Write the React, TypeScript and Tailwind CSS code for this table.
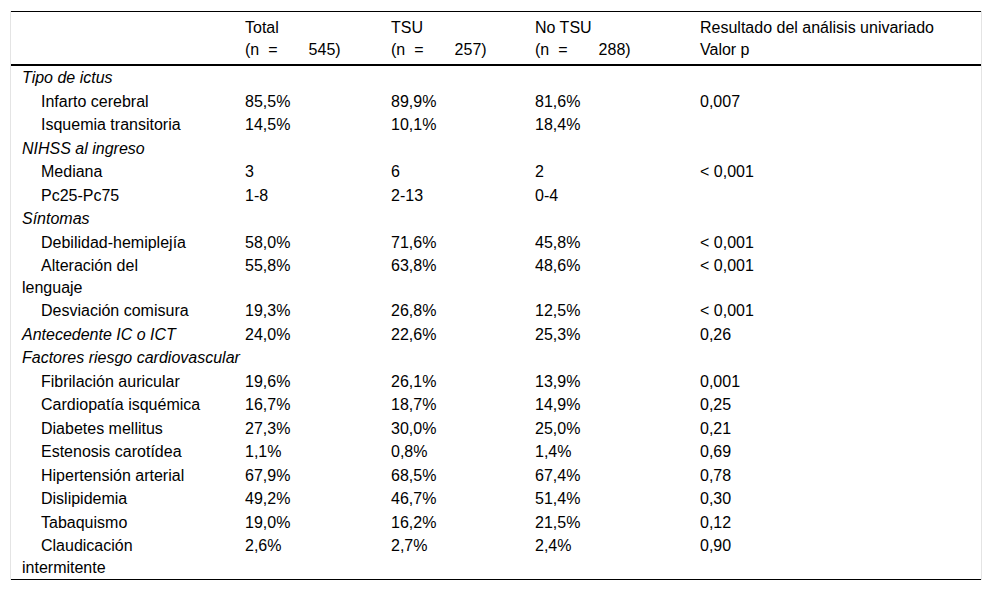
import React from "react";

type Row =
  | { kind: "cat"; label: string; vals?: string[] }
  | { kind: "item"; label: React.ReactNode; vals: string[] };

const rows: Row[] = [
  { kind: "cat", label: "Tipo de ictus" },
  { kind: "item", label: "Infarto cerebral", vals: ["85,5%", "89,9%", "81,6%", "0,007"] },
  { kind: "item", label: "Isquemia transitoria", vals: ["14,5%", "10,1%", "18,4%", ""] },
  { kind: "cat", label: "NIHSS al ingreso" },
  { kind: "item", label: "Mediana", vals: ["3", "6", "2", "< 0,001"] },
  { kind: "item", label: "Pc25-Pc75", vals: ["1-8", "2-13", "0-4", ""] },
  { kind: "cat", label: "Síntomas" },
  { kind: "item", label: "Debilidad-hemiplejía", vals: ["58,0%", "71,6%", "45,8%", "< 0,001"] },
  {
    kind: "item",
    label: (
      <>
        Alteración del
        <br />
        lenguaje
      </>
    ),
    vals: ["55,8%", "63,8%", "48,6%", "< 0,001"],
  },
  { kind: "item", label: "Desviación comisura", vals: ["19,3%", "26,8%", "12,5%", "< 0,001"] },
  { kind: "cat", label: "Antecedente IC o ICT", vals: ["24,0%", "22,6%", "25,3%", "0,26"] },
  { kind: "cat", label: "Factores riesgo cardiovascular" },
  { kind: "item", label: "Fibrilación auricular", vals: ["19,6%", "26,1%", "13,9%", "0,001"] },
  { kind: "item", label: "Cardiopatía isquémica", vals: ["16,7%", "18,7%", "14,9%", "0,25"] },
  { kind: "item", label: "Diabetes mellitus", vals: ["27,3%", "30,0%", "25,0%", "0,21"] },
  { kind: "item", label: "Estenosis carotídea", vals: ["1,1%", "0,8%", "1,4%", "0,69"] },
  { kind: "item", label: "Hipertensión arterial", vals: ["67,9%", "68,5%", "67,4%", "0,78"] },
  { kind: "item", label: "Dislipidemia", vals: ["49,2%", "46,7%", "51,4%", "0,30"] },
  { kind: "item", label: "Tabaquismo", vals: ["19,0%", "16,2%", "21,5%", "0,12"] },
  {
    kind: "item",
    label: (
      <>
        Claudicación
        <br />
        intermitente
      </>
    ),
    vals: ["2,6%", "2,7%", "2,4%", "0,90"],
  },
];

function NHead({ title, n }: { title: string; n: string }) {
  return (
    <>
      {title}
      <br />
      <span className="whitespace-nowrap">
        (n<span className="ml-[9px]">=</span>
        <span className="ml-[31px]">{n})</span>
      </span>
    </>
  );
}

export default function App() {
  const td = "pl-[11px] py-[1px] align-top text-left font-normal";
  const th = "pl-[11px] pt-[5px] pb-[4px] text-left font-normal align-top";
  return (
    <div
      className="w-[992px] h-[591px] bg-white pt-[11px] pl-[10px] text-black text-[16px] leading-[21.5px]"
      style={{ fontFamily: '"Liberation Sans", Arial, sans-serif' }}
    >
      <div className="w-[972px] border-x border-[#e4e4e4]">
        <table className="w-[970px] table-fixed border-collapse border-t border-b border-black">
          <colgroup>
            <col className="w-[223px]" />
            <col className="w-[146px]" />
            <col className="w-[144px]" />
            <col className="w-[165px]" />
            <col className="w-[292px]" />
          </colgroup>
          <thead>
            <tr className="border-b-2 border-black">
              <th className={th}></th>
              <th className={th}>
                <NHead title="Total" n="545" />
              </th>
              <th className={th}>
                <NHead title="TSU" n="257" />
              </th>
              <th className={th}>
                <NHead title="No TSU" n="288" />
              </th>
              <th className={th}>
                Resultado del análisis univariado
                <br />
                Valor p
              </th>
            </tr>
          </thead>
          <tbody>
            {rows.map((r, i) => (
              <tr key={i}>
                {r.kind === "cat" ? (
                  <td className={`${td} italic whitespace-nowrap`}>{r.label}</td>
                ) : (
                  <td className={`${td} indent-[19px] whitespace-nowrap`}>{r.label}</td>
                )}
                {[0, 1, 2, 3].map((j) => (
                  <td key={j} className={td}>
                    {r.vals ? r.vals[j] : ""}
                  </td>
                ))}
              </tr>
            ))}
          </tbody>
        </table>
      </div>
    </div>
  );
}
